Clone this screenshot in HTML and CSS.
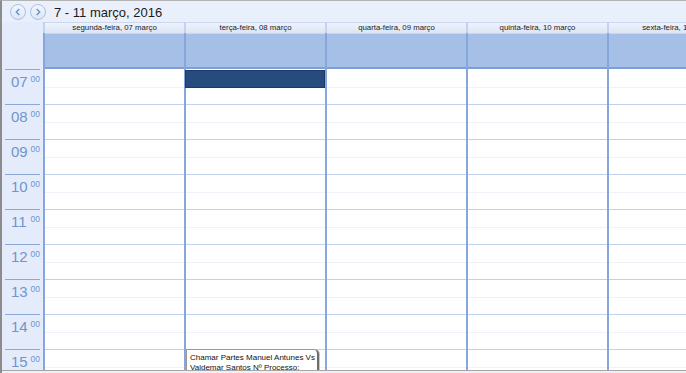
FILE: index.html
```html
<!DOCTYPE html>
<html lang="pt">
<head>
<meta charset="UTF-8">
<title>Calendário</title>
<link rel="stylesheet" href="styles.css">
</head>
<body>
<div class="cal">
  <div class="titlebar">
    <button class="nav">
      <svg width="16" height="16" viewBox="0 0 16 16"><circle cx="8" cy="8" r="7.5" fill="url(#g)" stroke="#a9c0e4"/><path d="M9.3 5 6.3 8l3 3" fill="none" stroke="#6f90c8" stroke-width="1.4"/>
        <defs><linearGradient id="g" x1="0" y1="0" x2="0" y2="1"><stop offset="0" stop-color="#f4f8fe"/><stop offset="1" stop-color="#d9e5f7"/></linearGradient></defs></svg>
    </button>
    <button class="nav">
      <svg width="16" height="16" viewBox="0 0 16 16"><circle cx="8" cy="8" r="7.5" fill="url(#g)" stroke="#a9c0e4"/><path d="M6.7 5l3 3-3 3" fill="none" stroke="#6f90c8" stroke-width="1.4"/></svg>
    </button>
    <span class="title">7 - 11 março, 2016</span>
  </div>

  <div class="head">
    <div class="head-gutter"></div>
    <div class="day"><div class="day-name">segunda-feira, 07 março</div><div class="allday"></div></div>
    <div class="day"><div class="day-name">terça-feira, 08 março</div><div class="allday"></div></div>
    <div class="day"><div class="day-name">quarta-feira, 09 março</div><div class="allday"></div></div>
    <div class="day"><div class="day-name">quinta-feira, 10 março</div><div class="allday"></div></div>
    <div class="day"><div class="day-name">sexta-feira, 11 março</div><div class="allday"></div></div>
  </div>

  <div class="grid">
    <div class="gutter">
      <div class="hour-label"><span class="h">07</span><span class="m">00</span></div>
      <div class="hour-label"><span class="h">08</span><span class="m">00</span></div>
      <div class="hour-label"><span class="h">09</span><span class="m">00</span></div>
      <div class="hour-label"><span class="h">10</span><span class="m">00</span></div>
      <div class="hour-label"><span class="h">11</span><span class="m">00</span></div>
      <div class="hour-label"><span class="h">12</span><span class="m">00</span></div>
      <div class="hour-label"><span class="h">13</span><span class="m">00</span></div>
      <div class="hour-label"><span class="h">14</span><span class="m">00</span></div>
      <div class="hour-label"><span class="h">15</span><span class="m">00</span></div>
    </div>
    <div class="col">
      <div class="hour"><div class="half"></div><div class="half"></div></div>
      <div class="hour"><div class="half"></div><div class="half"></div></div>
      <div class="hour"><div class="half"></div><div class="half"></div></div>
      <div class="hour"><div class="half"></div><div class="half"></div></div>
      <div class="hour"><div class="half"></div><div class="half"></div></div>
      <div class="hour"><div class="half"></div><div class="half"></div></div>
      <div class="hour"><div class="half"></div><div class="half"></div></div>
      <div class="hour"><div class="half"></div><div class="half"></div></div>
      <div class="hour"><div class="half"></div><div class="half"></div></div>
    </div>
    <div class="col">
      <div class="hour"><div class="half selected"></div><div class="half"></div></div>
      <div class="hour"><div class="half"></div><div class="half"></div></div>
      <div class="hour"><div class="half"></div><div class="half"></div></div>
      <div class="hour"><div class="half"></div><div class="half"></div></div>
      <div class="hour"><div class="half"></div><div class="half"></div></div>
      <div class="hour"><div class="half"></div><div class="half"></div></div>
      <div class="hour"><div class="half"></div><div class="half"></div></div>
      <div class="hour"><div class="half"></div><div class="half"></div></div>
      <div class="hour"><div class="half"></div><div class="half"></div></div>
      <div class="event">Chamar Partes Manuel Antunes Vs<br>Valdemar Santos Nº Processo:</div>
    </div>
    <div class="col">
      <div class="hour"><div class="half"></div><div class="half"></div></div>
      <div class="hour"><div class="half"></div><div class="half"></div></div>
      <div class="hour"><div class="half"></div><div class="half"></div></div>
      <div class="hour"><div class="half"></div><div class="half"></div></div>
      <div class="hour"><div class="half"></div><div class="half"></div></div>
      <div class="hour"><div class="half"></div><div class="half"></div></div>
      <div class="hour"><div class="half"></div><div class="half"></div></div>
      <div class="hour"><div class="half"></div><div class="half"></div></div>
      <div class="hour"><div class="half"></div><div class="half"></div></div>
    </div>
    <div class="col">
      <div class="hour"><div class="half"></div><div class="half"></div></div>
      <div class="hour"><div class="half"></div><div class="half"></div></div>
      <div class="hour"><div class="half"></div><div class="half"></div></div>
      <div class="hour"><div class="half"></div><div class="half"></div></div>
      <div class="hour"><div class="half"></div><div class="half"></div></div>
      <div class="hour"><div class="half"></div><div class="half"></div></div>
      <div class="hour"><div class="half"></div><div class="half"></div></div>
      <div class="hour"><div class="half"></div><div class="half"></div></div>
      <div class="hour"><div class="half"></div><div class="half"></div></div>
    </div>
    <div class="col">
      <div class="hour"><div class="half"></div><div class="half"></div></div>
      <div class="hour"><div class="half"></div><div class="half"></div></div>
      <div class="hour"><div class="half"></div><div class="half"></div></div>
      <div class="hour"><div class="half"></div><div class="half"></div></div>
      <div class="hour"><div class="half"></div><div class="half"></div></div>
      <div class="hour"><div class="half"></div><div class="half"></div></div>
      <div class="hour"><div class="half"></div><div class="half"></div></div>
      <div class="hour"><div class="half"></div><div class="half"></div></div>
      <div class="hour"><div class="half"></div><div class="half"></div></div>
    </div>
  </div>
  <div class="foot"></div>
</div>
</body>
</html>
```

FILE: styles.css
```css
*{
  margin: 0;
  padding: 0;
  border: 0;
  box-sizing: border-box;
}
html, body{
  width: 686px;
  height: 373px;
  overflow: hidden;
  background-color: #f0f0f0;
}
.cal{
  width: 686px;
  height: 373px;
  border-left: 2px solid #8c8c8c;
  border-top: 1px solid #b4b4b4;
  overflow: hidden;
  font-family: "Liberation Sans", Arial, sans-serif;
}
.titlebar{
  height: 21px;
  display: flex;
  align-items: center;
  gap: 4px;
  padding-left: 8px;
  padding-top: 1px;
  background-color: #eaf0fb;
}
.nav{
  width: 16px;
  height: 16px;
  background: none;
  display: flex;
}
.title{
  margin-left: 4px;
  font-size: 13px;
  color: #1b1b1b;
}
.head, .grid{
  display: grid;
  grid-template-columns: 41px repeat(5, 141px);
}
.head-gutter{
  background-color: #e4ecfb;
}
.day{
  border-left: 2px solid #86a6dc;
}
.day-name{
  height: 11px;
  font-size: 7.8px;
  line-height: 10px;
  text-align: center;
  white-space: nowrap;
  overflow: hidden;
  color: #222;
  background: linear-gradient(#eef3fc, #dce5f5);
  border-top: 1px solid #cad7ef;
  box-shadow: -2px 0 0 #c3d3ee;
}
.allday{
  height: 36px;
  background-color: #a6bfe7;
  border-top: 1px solid #c9d7ef;
  border-bottom: 2px solid #7e9fd6;
}
.grid{
  height: 301px;
  overflow: hidden;
  align-items: start;
}
.gutter{
  background-color: #e4ecfb;
  height: 301px;
}
.hour-label{
  height: 35px;
  margin: 0 3px;
  border-top: 1px solid #8ea9d6;
  display: flex;
  align-items: flex-start;
  padding-top: 3px;
  padding-left: 6px;
  color: #7095cd;
}
.hour-label .h{
  font-size: 15px;
  width: 22px;
}
.hour-label .m{
  font-size: 8.5px;
  margin-top: 1px;
}
.col{
  position: relative;
  border-left: 2px solid #86a6dc;
  background-color: #fff;
  height: 301px;
}
.hour{
  height: 35px;
  border-top: 1px solid #c3d2ec;
}
.hour:first-child{
  border-top-color: #fff;
}
.half{
  height: 17px;
}
.half:first-child{
  height: 18px;
  border-bottom: 1px solid #eef2f9;
}
.selected{
  margin-left: -1px;
  background-color: #264c7e;
  border: 1px solid #1c3a63;
}
.half.selected{
  border-bottom: 1px solid #1c3a63;
}
.event{
  position: absolute;
  left: 0;
  top: 280px;
  width: 133px;
  height: 30px;
  padding: 3px 0 0 3px;
  font-size: 8px;
  line-height: 10px;
  white-space: nowrap;
  overflow: hidden;
  color: #111;
  background-color: #fff;
  border-left: 1px solid #9a9a9a;
  border-top: 1px solid #9a9a9a;
  border-right: 2px solid #6d6d6d;
  border-radius: 0 5px 0 0;
  box-shadow: 1px 0 0 #c8c8c8;
}
.foot{
  height: 3px;
  border-top: 1px solid #a6a6a6;
  background-color: #f0f0f0;
}
```
